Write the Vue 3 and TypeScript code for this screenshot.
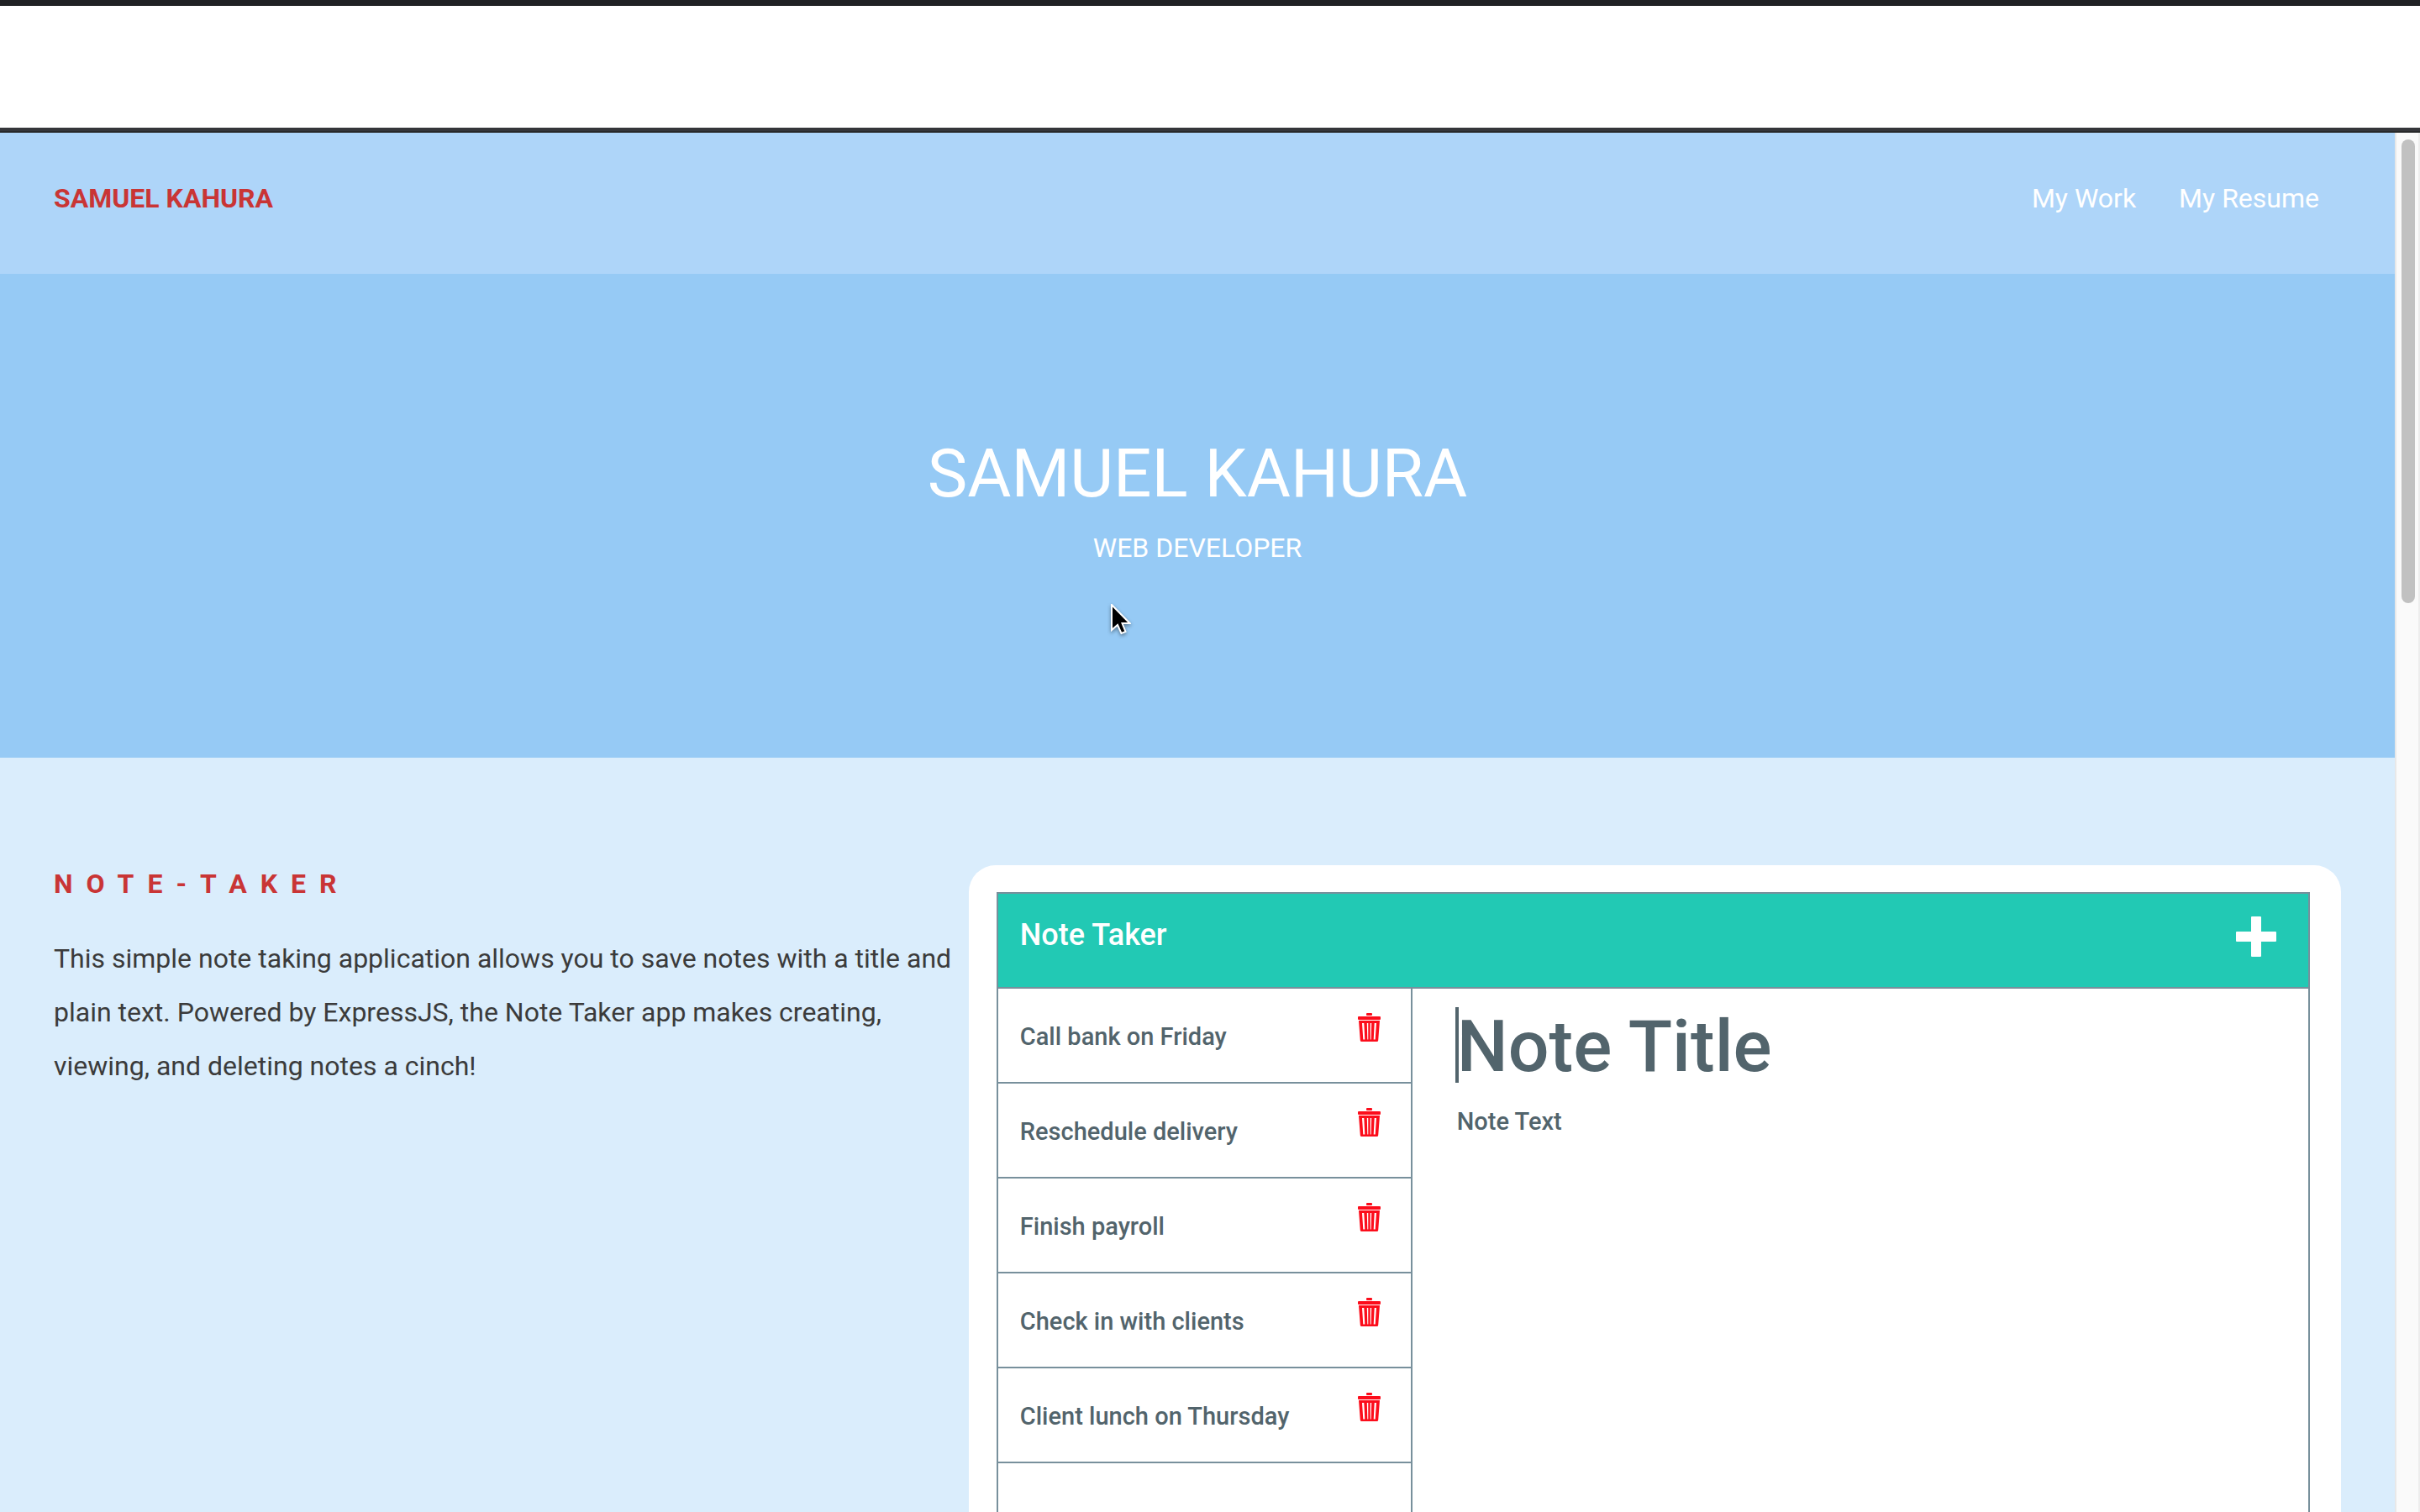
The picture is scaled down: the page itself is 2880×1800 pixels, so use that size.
<script setup lang="ts">
import { ref } from 'vue'

interface Note {
  id: number
  title: string
}

const notes = ref<Note[]>([
  { id: 1, title: 'Call bank on Friday' },
  { id: 2, title: 'Reschedule delivery' },
  { id: 3, title: 'Finish payroll' },
  { id: 4, title: 'Check in with clients' },
  { id: 5, title: 'Client lunch on Thursday' },
])

const noteTitle = ref('')
const noteText = ref('')

function removeNote(id: number) {
  notes.value = notes.value.filter((note) => note.id !== id)
}

function clearDraft() {
  noteTitle.value = ''
  noteText.value = ''
}
</script>

<template>
  <div class="window">
    <div class="chrome"></div>
    <div class="viewport">
      <div class="page">
        <header class="header">
          <h1 class="brand">SAMUEL KAHURA</h1>
          <nav class="nav">
            <a href="#work">My Work</a>
            <a href="#resume">My Resume</a>
          </nav>
        </header>

        <section class="hero">
          <h2 class="hero-name">SAMUEL KAHURA</h2>
          <p class="hero-role">WEB DEVELOPER</p>
          <svg class="cursor" viewBox="0 0 24 38" width="24" height="38" aria-hidden="true">
            <path d="M1 1V31L8 25L12.500 35L17.500 33L13.500 23H22.500Z" fill="#000" stroke="#fff" stroke-width="2" />
          </svg>
        </section>

        <main id="work" class="work">
          <article class="about">
            <h3 class="about-title">NOTE-TAKER</h3>
            <p class="about-text">
              This simple note taking application allows you to save notes with a title and plain text.
              Powered by ExpressJS, the Note Taker app makes creating, viewing, and deleting notes a cinch!
            </p>
          </article>

          <div class="card">
            <div class="app">
              <div class="app-bar">
                <span class="app-name">Note Taker</span>
                <button class="icon-button" type="button" aria-label="New note" @click="clearDraft">
                  <svg viewBox="0 0 48 48" width="48" height="48" aria-hidden="true">
                    <path d="M19 0H29Q30 0 30 1V18H47Q48 18 48 19V29Q48 30 47 30H30V47Q30 48 29 48H19Q18 48 18 47V30H1Q0 30 0 29V19Q0 18 1 18H18V1Q18 0 19 0Z" fill="#fff" />
                  </svg>
                </button>
              </div>
              <div class="app-body">
                <ul class="notes">
                  <li v-for="note in notes" :key="note.id" class="note">
                    <span>{{ note.title }}</span>
                    <button class="icon-button" type="button" :aria-label="`Delete ${note.title}`" @click="removeNote(note.id)">
                      <svg viewBox="0 0 27 34" width="27" height="34" aria-hidden="true">
                        <g fill="#fc0d1b">
                          <rect x="10" y="0" width="7" height="3" rx="1" />
                          <rect x="0" y="4" width="27" height="4" rx="1" />
                          <path fill-rule="evenodd" d="M1 9H26L24.200 32.500Q24 34 22.700 34H4.300Q3 34 2.800 32.500ZM5 12L6.300 31.500H8.300L7.300 12ZM10.800 12L11.300 31.500H12.300V12ZM14.700 12V31.500H15.700L16.200 12ZM19.700 12L18.700 31.500H20.700L22 12Z" />
                        </g>
                      </svg>
                    </button>
                  </li>
                </ul>
                <form class="editor" @submit.prevent>
                  <div class="title-row">
                    <input v-model="noteTitle" class="title-input" type="text" placeholder="Note Title" aria-label="Note title" />
                    <span class="caret"></span>
                  </div>
                  <textarea v-model="noteText" class="text-input" placeholder="Note Text" aria-label="Note text"></textarea>
                </form>
              </div>
            </div>
          </div>
        </main>
      </div>
      <div class="scrollbar"><div class="thumb"></div></div>
    </div>
  </div>
</template>

<style>
body {
  background: #fff;
}
</style>

<style scoped>
* {
  box-sizing: border-box;
  margin: 0;
}

.window {
  display: flex;
  flex-direction: column;
  height: 100vh;
  overflow: hidden;
  font-family: Roboto, 'Liberation Sans', sans-serif;
  font-size: 32px;
  line-height: 64px;
}

.chrome {
  flex: none;
  height: 156px;
  border-top: 7px solid #202124;
  border-bottom: 4px solid #35363a;
}

.viewport {
  display: flex;
  flex: 1;
  min-height: 0;
  border-top: 2px solid #28292a;
}

.page {
  flex: 1;
  min-width: 0;
  overflow: hidden;
  background: #daedfc;
}

.header {
  display: flex;
  justify-content: space-between;
  padding: 46px 90px 58px 64px;
  background: #aed5f9;
}

.brand {
  color: #c93535;
  font-size: 32px;
  font-weight: 700;
}

.nav {
  display: flex;
  gap: 51px;
}

.nav a {
  color: #fff;
  text-decoration: none;
}

.hero {
  position: relative;
  padding: 182px 64px 218px;
  background: #96caf5;
  color: #fff;
  text-align: center;
}

.hero-name {
  font-size: 80px;
  font-weight: 400;
  line-height: 112px;
}

.cursor {
  position: absolute;
  top: 393px;
  left: 1322px;
  filter: drop-shadow(0 2px 2px rgb(0 0 0 / 40%));
}

.work {
  display: grid;
  grid-template-columns: 2fr 3fr;
  padding: 128px 64px;
}

.about-title {
  margin-bottom: 35px;
  color: #c93535;
  font-size: 32px;
  font-weight: 700;
  letter-spacing: 16px;
  line-height: 44px;
}

.about-text {
  color: #3b3b3b;
}

.card {
  padding: 32px 37px 32px 33px;
  border-radius: 32px;
  background: #fff;
}

.app {
  border: 2px solid #78909c;
  color: #52646c;
  font-size: 29px;
  font-weight: 500;
  line-height: 40px;
}

.app-bar {
  display: flex;
  justify-content: space-between;
  align-items: flex-start;
  height: 113px;
  padding: 27px 38px 27px 26px;
  border-bottom: 2px solid #78909c;
  background: #22c9b4;
}

.app-name {
  color: #fff;
  font-size: 36px;
  line-height: 44px;
}

.icon-button {
  display: flex;
  padding: 0;
  border: 0;
  background: none;
}

.app-body {
  display: grid;
  grid-template-columns: 493px 1fr;
  min-height: 900px;
}

.notes {
  padding: 0;
  border-right: 2px solid #78909c;
  list-style: none;
}

.note {
  display: flex;
  justify-content: space-between;
  align-items: flex-start;
  height: 113px;
  padding: 29px 36px 29px 26px;
  border-bottom: 2px solid #78909c;
}

.note span {
  padding-top: 8px;
}

.editor {
  display: flex;
  flex-direction: column;
  padding: 22px 53px;
}

.title-row {
  position: relative;
}

.caret {
  position: absolute;
  top: 0;
  left: -2px;
  width: 4px;
  height: 90px;
  background: #52646c;
}

.title-input,
.text-input {
  display: block;
  width: 100%;
  padding: 0;
  border: 0;
  outline: 0;
  background: none;
  color: inherit;
  font: inherit;
  resize: none;
}

.title-input {
  height: 94px;
  font-size: 86px;
  line-height: 94px;
}

.text-input {
  height: 400px;
  margin-top: 22px;
}

.title-input::placeholder,
.text-input::placeholder {
  color: #52646c;
  opacity: 1;
}

.scrollbar {
  flex: none;
  width: 30px;
  padding: 8px 4px 8px 6px;
  border-right: 2px solid #ededed;
  border-left: 2px solid #e8e8e8;
  background: #fafafa;
}

.thumb {
  width: 16px;
  height: 552px;
  border-radius: 8px;
  background: #c1c1c1;
}
</style>
